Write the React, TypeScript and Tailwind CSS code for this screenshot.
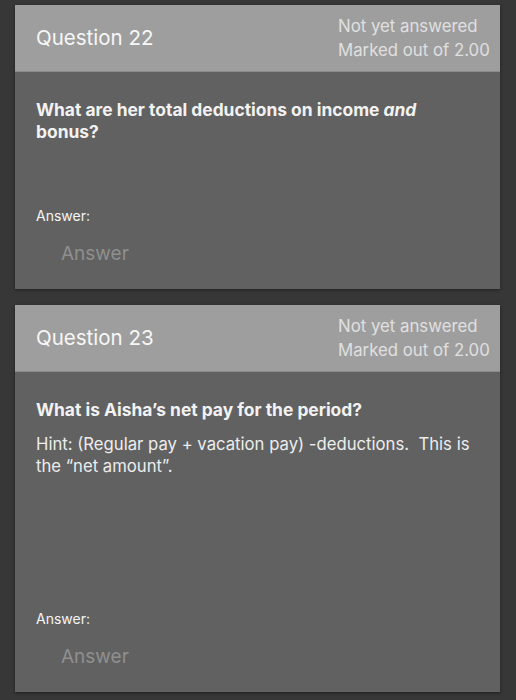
import React from "react";

function Card({
  num,
  children,
  gap,
}: {
  num: number;
  children: React.ReactNode;
  gap: string;
}) {
  return (
    <div className="w-[485px] bg-[#616161] shadow-[0_1px_3px_rgba(0,0,0,0.45)]">
      <div className="flex h-[67px] items-center justify-between bg-[#9e9e9e] border-b border-[#8a8a8a] pl-[21px] pr-[11px]">
        <div className="text-[20.5px] text-[#f7f7f7] leading-none">Question {num}</div>
        <div className="w-[151px] text-[16.8px] leading-[24px] text-[#e0e0e0] whitespace-nowrap">
          <div>Not yet answered</div>
          <div>Marked out of 2.00</div>
        </div>
      </div>
      <div className="px-[21px] pt-[27px] pb-[15px]">
        {children}
        <div className={`${gap} text-[14px] leading-[20px] text-[#f5f5f5]`}>Answer:</div>
        <div className="mt-[8px] h-[40px] flex items-center pl-[25px] text-[19px] text-[#8f8f8f]">
          Answer
        </div>
      </div>
    </div>
  );
}

export default function App() {
  return (
    <div
      className="min-h-[700px] bg-[#373737] pl-[15px] pt-[5px] pb-[8px] flex flex-col gap-[16px]"
      style={{ fontFamily: "Inter, 'Liberation Sans', sans-serif" }}
    >
      <Card num={22} gap="mt-[63px]">
        <div className="text-[17.4px] leading-[22px] font-bold text-[#f2f2f2] w-[420px]">
          What are her total deductions on income <em>and</em> bonus?
        </div>
      </Card>
      <Card num={23} gap="mt-[132px]">
        <div className="text-[17.4px] leading-[22px] font-bold text-[#f2f2f2]">
          What is Aisha’s net pay for the period?
        </div>
        <div className="mt-[12px] text-[16.7px] leading-[22px] text-[#ededed] w-[445px]">
          Hint: (Regular pay + vacation pay) -deductions.&nbsp; This is the “net amount”.
        </div>
      </Card>
    </div>
  );
}
